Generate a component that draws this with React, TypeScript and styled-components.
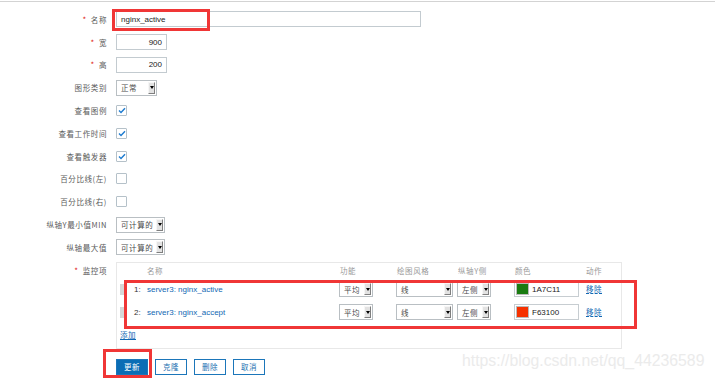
import React from 'react'
import styled, { createGlobalStyle } from 'styled-components'

const GlobalStyle = createGlobalStyle`
  body {
    margin: 0;
    padding-top: 1px;
    background: #fff;
    font-family: "Liberation Sans", Arial, "Noto Sans CJK SC", sans-serif;
  }
`

const CJK = `"Noto Sans CJK SC", "Liberation Sans", sans-serif`

const Page = styled.div`
  position: relative;
  width: 715px;
  height: 377px;
  border-top: 1px solid #d3d3d3;
  overflow: hidden;
`

const Form = styled.div`
  padding-top: 6px;
  display: flex;
  flex-direction: column;
`

const Row = styled.div<{ top?: boolean }>`
  display: grid;
  grid-template-columns: 107px 1fr;
  column-gap: 9px;
  height: ${p => (p.top ? 'auto' : '22.8px')};
  align-items: ${p => (p.top ? 'start' : 'center')};
  margin-top: ${p => (p.top ? '3px' : '0')};
`

const Label = styled.div<{ pad?: number }>`
  text-align: right;
  font-family: ${CJK};
  font-size: 7.5px;
  letter-spacing: 0.6px;
  color: #5a5a5a;
  padding-top: ${p => p.pad || 0}px;
  white-space: nowrap;
`

const Star = styled.span`
  color: #e02020;
  margin-right: 4px;
  font-size: 8px;
`

const TextInput = styled.div<{ w: number; right?: boolean }>`
  box-sizing: border-box;
  width: ${p => p.w}px;
  height: 16px;
  border: 1px solid #c3cbd0;
  background: #fff;
  font-size: 8px;
  color: #222;
  display: flex;
  align-items: center;
  justify-content: ${p => (p.right ? 'flex-end' : 'flex-start')};
  padding: 0 4px;
`

const SelectBox = styled.div<{ w: number }>`
  box-sizing: border-box;
  width: ${p => p.w}px;
  height: 16px;
  border: 1px solid #b9bfc3;
  background: #fff;
  display: flex;
  align-items: center;
  justify-content: space-between;
  padding-left: 4px;
  padding-right: 1px;
  font-family: ${CJK};
  font-size: 7.5px;
  letter-spacing: 0.6px;
  color: #4a4a4a;
`

const Arrow = styled.span`
  box-sizing: border-box;
  width: 7px;
  height: 12px;
  background: #e2e2e2;
  border: 1px solid;
  border-color: #f6f6f6 #7f7f7f #7f7f7f #f6f6f6;
  display: flex;
  align-items: center;
  justify-content: center;
  &::after {
    content: '';
    border-left: 2px solid transparent;
    border-right: 2px solid transparent;
    border-top: 3px solid #000;
  }
`

const Select = ({ w, text }: { w: number; text: string }) => (
  <SelectBox w={w}>
    <span>{text}</span>
    <Arrow />
  </SelectBox>
)

const Box = styled.div`
  box-sizing: border-box;
  width: 11px;
  height: 11px;
  border: 1px solid #b5c1c9;
  border-radius: 1px;
  background: #fff;
  display: flex;
  align-items: center;
  justify-content: center;
`

const Check = ({ on }: { on?: boolean }) => (
  <Box>
    {on && (
      <svg width="8" height="7" viewBox="0 0 8 7">
        <path d="M1 3.6 L3 5.5 L7 1.2" fill="none" stroke="#1d7bd0" strokeWidth="1.4" />
      </svg>
    )}
  </Box>
)

const Items = styled.div`
  box-sizing: border-box;
  width: 506px;
  border: 1px solid #e8e8e8;
  padding-bottom: 6px;
`

const ItemRow = styled.div<{ h: number }>`
  display: grid;
  grid-template-columns: 13px 16px 193px 57px 61px 57px 71px 1fr;
  height: ${p => p.h}px;
  align-items: center;
`

const Head = styled.div`
  font-family: ${CJK};
  font-size: 7.5px;
  letter-spacing: 0.6px;
  color: #999;
  padding-left: 1px;
`

const Handle = styled.span`
  display: block;
  width: 4px;
  height: 11px;
  margin-left: 3px;
  background-image: radial-gradient(circle, #a8a8a8 0.6px, transparent 0.8px);
  background-size: 2px 2px;
`

const Num = styled.span`
  font-size: 8px;
  color: #333;
  padding-left: 4px;
`

const ItemLink = styled.span`
  font-size: 8px;
  color: #1168b3;
  padding-left: 1px;
`

const ColorInput = styled.div`
  box-sizing: border-box;
  width: 65px;
  height: 16px;
  border: 1px solid #c7cdd1;
  display: flex;
  align-items: center;
  gap: 3px;
  padding-left: 1px;
  font-size: 8px;
  color: #222;
`

const Swatch = styled.span<{ c: string }>`
  width: 13px;
  height: 12px;
  background: ${p => p.c};
  border: 1px solid #bbb;
  box-sizing: border-box;
`

const Action = styled.span`
  font-family: ${CJK};
  font-size: 7.5px;
  letter-spacing: 0.6px;
  color: #1168b3;
  border-bottom: 1px dashed #1168b3;
  justify-self: start;
  margin-left: 1px;
  line-height: 9px;
`

const AddLink = styled.span`
  display: inline-block;
  margin: 2px 0 0 3px;
  font-family: ${CJK};
  font-size: 7.5px;
  letter-spacing: 0.6px;
  color: #1168b3;
  border-bottom: 1px solid #1168b3;
  line-height: 9px;
`

const Buttons = styled.div`
  display: flex;
  gap: 7px;
  margin: 10px 0 0 116px;
`

const Btn = styled.div<{ primary?: boolean }>`
  box-sizing: border-box;
  width: 32px;
  height: 16px;
  display: flex;
  align-items: center;
  justify-content: center;
  font-family: ${CJK};
  font-size: 7.5px;
  letter-spacing: 0.6px;
  border: 1px solid #1b76ba;
  background: ${p => (p.primary ? '#0a6db5' : '#fff')};
  color: ${p => (p.primary ? '#fff' : '#1b6fb0')};
`

const Mark = styled.div<{ x: number; y: number; w: number; h: number }>`
  position: absolute;
  left: ${p => p.x}px;
  top: ${p => p.y}px;
  width: ${p => p.w}px;
  height: ${p => p.h}px;
  box-sizing: border-box;
  border: 3px solid #f03636;
`

const Watermark = styled.div`
  position: absolute;
  left: 462px;
  top: 350px;
  font-size: 15.8px;
  color: #ebebeb;
  white-space: nowrap;
`

const items = [
  { n: '1:', name: 'server3: nginx_active', color: '#1A7C11', hex: '1A7C11' },
  { n: '2:', name: 'server3: nginx_accept', color: '#F63100', hex: 'F63100' },
]

export default function App() {
  return (
    <Page>
      <GlobalStyle />
      <Form>
        <Row>
          <Label><Star>*</Star>名称</Label>
          <TextInput w={305}>nginx_active</TextInput>
        </Row>
        <Row>
          <Label><Star>*</Star>宽</Label>
          <TextInput w={51} right>900</TextInput>
        </Row>
        <Row>
          <Label><Star>*</Star>高</Label>
          <TextInput w={51} right>200</TextInput>
        </Row>
        <Row>
          <Label>图形类别</Label>
          <Select w={41} text="正常" />
        </Row>
        <Row>
          <Label>查看图例</Label>
          <Check on />
        </Row>
        <Row>
          <Label>查看工作时间</Label>
          <Check on />
        </Row>
        <Row>
          <Label>查看触发器</Label>
          <Check on />
        </Row>
        <Row>
          <Label>百分比线(左)</Label>
          <Check />
        </Row>
        <Row>
          <Label>百分比线(右)</Label>
          <Check />
        </Row>
        <Row>
          <Label>纵轴Y最小值MIN</Label>
          <Select w={49} text="可计算的" />
        </Row>
        <Row>
          <Label>纵轴最大值</Label>
          <Select w={49} text="可计算的" />
        </Row>
        <Row top>
          <Label pad={3}><Star>*</Star>监控项</Label>
          <Items>
            <ItemRow h={15}>
              <span />
              <span />
              <Head>名称</Head>
              <Head>功能</Head>
              <Head>绘图风格</Head>
              <Head>纵轴Y侧</Head>
              <Head>颜色</Head>
              <Head>动作</Head>
            </ItemRow>
            {items.map(it => (
              <ItemRow h={23} key={it.n}>
                <Handle />
                <Num>{it.n}</Num>
                <ItemLink>{it.name}</ItemLink>
                <Select w={34} text="平均" />
                <Select w={57} text="线" />
                <Select w={34} text="左侧" />
                <ColorInput>
                  <Swatch c={it.color} />
                  {it.hex}
                </ColorInput>
                <Action>移除</Action>
              </ItemRow>
            ))}
            <AddLink>添加</AddLink>
          </Items>
        </Row>
      </Form>
      <Buttons>
        <Btn primary>更新</Btn>
        <Btn>克隆</Btn>
        <Btn>删除</Btn>
        <Btn>取消</Btn>
      </Buttons>
      <Mark x={112} y={7} w={98} h={22} />
      <Mark x={124} y={278} w={513} h={49} />
      <Mark x={103} y={347} w={49} h={29} />
      <Watermark>https://blog.csdn.net/qq_44236589</Watermark>
    </Page>
  )
}
